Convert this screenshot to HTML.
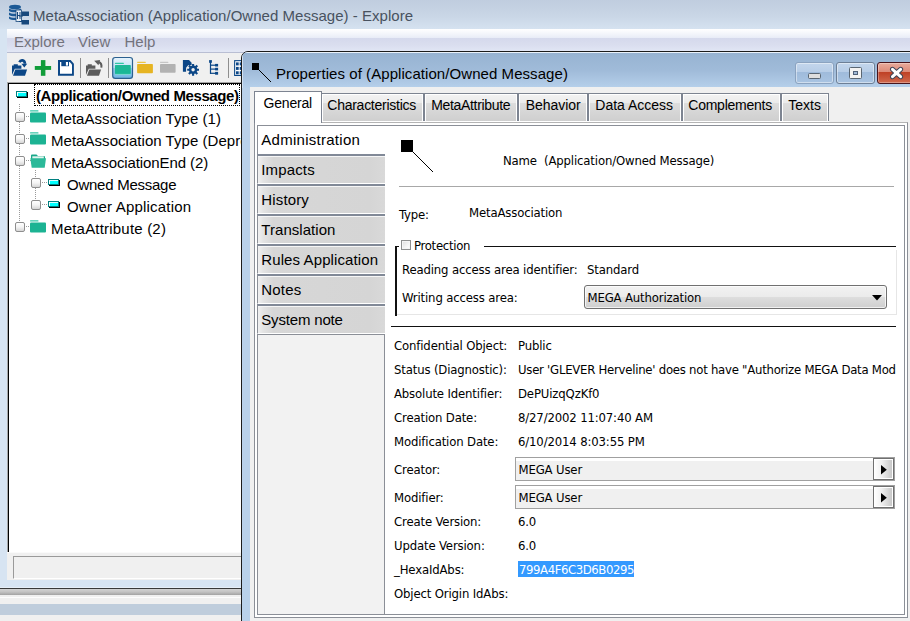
<!DOCTYPE html>
<html><head><meta charset="utf-8"><title>MetaAssociation (Application/Owned Message) - Explore</title>
<style>
*{box-sizing:border-box;margin:0;padding:0}
html,body{width:910px;height:621px;overflow:hidden}
body{position:relative;background:#d7e4f2;font-family:"Liberation Sans",sans-serif;color:#000}
.abs{position:absolute}
.ui{font-family:"Liberation Sans",sans-serif;font-size:15px;white-space:nowrap}
.th{font-family:"DejaVu Sans Condensed","Liberation Sans",sans-serif;font-size:13px;white-space:nowrap;letter-spacing:-0.15px}
#mtitle{left:0;top:0;width:910px;height:29px;background:linear-gradient(180deg,#c0cddf 0%,#c9d6e6 55%,#d5e2f0 100%)}
#mtitle .t{left:33px;top:7px;color:#485260;letter-spacing:.03px}
#menubar{left:7px;top:29px;width:903px;height:24px;border-bottom:1px solid #b9bed3;background:linear-gradient(180deg,#ffffff 0%,#f4f6fb 20%,#e8ecf7 39%,#d5d9ec 40%,#dadeef 70%,#e2e7f5 100%)}
#menubar span{position:absolute;top:4px;color:#73737c}
#toolbar{left:7px;top:53px;width:240px;height:30px;background:#f0f0f0}
#tree{left:7px;top:82px;width:240px;height:470px;background:#fff;border-left:2px solid #000;border-top:2px solid #000}
#status{left:7px;top:552px;width:240px;height:28px;background:#f0f0f0;border-top:1px solid #fafafa}
#status .in{left:6px;top:3px;width:240px;height:23px;border-left:1px solid #9a9a9a;border-top:1px solid #9a9a9a;border-bottom:1px solid #fff}
#b1{left:0;top:580px;width:242px;height:8px;background:#d7e4f2;border-bottom:1px solid #e6eef7}
#b2{left:0;top:588px;width:242px;height:1px;background:#383838}
#b3{left:0;top:589px;width:242px;height:6px;background:linear-gradient(180deg,#d2d2d2 0%,#c2c2c2 50%,#a2a2a2 100%)}
#b4{left:0;top:595px;width:242px;height:9px;background:linear-gradient(180deg,#f0f0f0 0,#f0f0f0 2px,#fdfdfd 2px,#fdfdfd 3px,#f0f0f0 3px)}
#b5{left:0;top:604px;width:242px;height:11px;background:#bfcddc}
#b6{left:0;top:615px;width:242px;height:6px;background:#f0f0f0}
.row{position:absolute;height:22px;line-height:22px}
.exp{width:10px;height:10px;border:1px solid #8e8e8e;border-radius:2px;background:linear-gradient(180deg,#fff 0%,#f4f4f4 50%,#d6d6d6 100%)}
.vdot{width:1px;background:repeating-linear-gradient(180deg,#9a9a9a 0,#9a9a9a 1px,transparent 1px,transparent 2px)}
.hdot{height:1px;background:repeating-linear-gradient(90deg,#9a9a9a 0,#9a9a9a 1px,transparent 1px,transparent 2px)}
.focus{border:1px dotted #000}
.cbtn{border:1px solid #6d7f96;border-radius:3px;background:linear-gradient(180deg,#c3d6ec 0%,#b7cde7 44%,#9fbbdb 47%,#a9c4e2 100%);box-shadow:inset 0 0 0 1px rgba(255,255,255,.45)}
.cbtn.close{border-color:#47141c;background:linear-gradient(180deg,#e8ab9c 0%,#dc8a78 44%,#bf4126 47%,#d0694e 100%);box-shadow:inset 0 0 0 1px rgba(255,255,255,.3)}
.tab{border:1px solid #7d8491;border-bottom:none;background:linear-gradient(180deg,#f3f3f3 0%,#ebebeb 33%,#dddddd 34%,#cfcfcf 100%);box-shadow:inset 1px 1px 0 #fff,inset -1px 0 0 #fff,0 1px 0 #fff;font-family:"Liberation Sans",sans-serif;font-size:14px;line-height:22px;white-space:nowrap}
.tab.sel{background:#fff;line-height:22px;height:33px;box-shadow:none}
.stab{border-top:2px solid #818997;border-left:1px solid #8b8f97;border-bottom:1px solid #fff;background:linear-gradient(90deg,#f0f0f0 0%,#e4e4e4 4%,#d7d7d7 12%,#d5d5d5 88%,#d9d9d9 100%);line-height:27px;box-shadow:inset 0 1px 0 #f6f6f6}
.stab span{position:absolute;left:3.300px;top:0}
.stab.sel{background:#fff;box-shadow:none;border-top:1px solid #8b8f97;border-bottom:none}
.chk{width:10px;height:10px;border:1px solid #8e8f8f;background:linear-gradient(135deg,#dcdcdc 0%,#f4f4f4 60%,#fff 100%);box-shadow:inset 0 0 0 1px #f4f4f4}
.combo{border:1px solid #707070;border-radius:3px;background:linear-gradient(180deg,#f2f2f2 0%,#ebebeb 48%,#dddddd 52%,#cfcfcf 100%);box-shadow:inset 0 0 0 1px rgba(255,255,255,.7)}
.fld{border:1px solid #a0a0a0;background:linear-gradient(180deg,#fff 0,#fff 3px,#f0f0f0 3px,#f0f0f0 100%)}
.fbtn{right:0;top:0;width:21px;height:22px;border:1px solid #707070;background:linear-gradient(90deg,#fff 0%,#f0f0f0 40%,#c4c4c4 100%);box-shadow:inset 0 0 0 1px #fff}
#dlg{left:241px;top:51px;width:700px;height:600px;border:1px solid #1c1c1c;border-radius:7px 0 0 0;background:#b9d1ea;overflow:hidden}
#dtitle{left:0;top:0;width:700px;height:36px;background:linear-gradient(180deg,#97b3d2 0%,#a0bbd9 50%,#b6d0eb 100%);border-top:1px solid #e9f1fa;border-left:1px solid #d2e1f2}
#dclient{left:8px;top:35px;width:700px;height:600px;background:#f0f0f0}
</style></head><body>
<div id="mtitle" class="abs"><svg class="abs" style="left:7px;top:3px" width="24" height="24" viewBox="7 3 24 24"><g fill="#1d5a96"><ellipse cx="15" cy="7" rx="6" ry="2.300"/><path d="M9 8.500c1.500 1.800 10.500 1.800 12 0v2.500c-1.500 1.800-10.500 1.800-12 0z"/><path d="M9 12.500c1.500 1.800 10.500 1.800 12 0v2.500c-1.500 1.800-10.500 1.800-12 0z"/><path d="M9 16.500c1.500 1.800 10.500 1.800 12 0v2c-1.500 2-10.500 2-12 0z"/></g><rect x="16" y="10" width="5.500" height="11.500" fill="#e6eef6" stroke="#17487c" stroke-width=".8"/><path d="M17.500 12v7M20 12v7M17.500 15.500h2.500" stroke="#17487c" stroke-width="1"/><rect x="21.500" y="11.500" width="7.500" height="4.500" fill="#17487c"/><rect x="21.500" y="20" width="7.500" height="4.500" fill="#17487c"/><path d="M19 16h4M19 21.500h3" stroke="#17487c" stroke-width="1.200"/></svg><span class="abs ui t">MetaAssociation (Application/Owned Message) - Explore</span></div>
<div id="menubar" class="abs ui"><span style="left:7px">Explore</span><span style="left:71px">View</span><span style="left:117.500px">Help</span></div>
<div id="toolbar" class="abs"><svg class="abs" style="left:0;top:-1px" width="240" height="31" viewBox="7 52 240 31">
 <g fill="#0c4787">
  <path d="M12 65.400h1.700v-1.200h4.100v1.200h3.600v3.400h-6.600l-2.800 6.200z"/>
  <path d="M15.300 69.400h11.800l-2.100 6.300h-12z"/>
  <path d="M19.500 62.200c1-2.600 5.200-2.800 5.400 1.600" fill="none" stroke="#0c4787" stroke-width="2.700"/>
  <path d="M21.400 63.700h5.800l-2.900 3.700z"/>
 </g>
 <rect x="40.900" y="60.100" width="4.500" height="15.700" fill="#119c39"/>
 <rect x="34.800" y="66" width="16.300" height="3.900" fill="#119c39"/>
 <path d="M58 60.100h12.600l3.300 3.700v12h-15.900z" fill="#0c4787"/>
 <path d="M60 62h9.700l2.300 2.600v9.200h-12z" fill="#fff"/>
 <rect x="61.300" y="60.100" width="7.700" height="6.100" fill="#0c4787"/>
 <rect x="65.900" y="62" width="2.100" height="3.600" fill="#fff"/>
 <rect x="80" y="58" width="1" height="20" fill="#8e8e8e"/>
 <g fill="#5c5c5c">
  <path d="M86 65.400h1.700v-1.200h4.100v1.200h3.600v3.400h-6.600l-2.800 6.200z"/>
  <path d="M89.300 69.400h11.800l-2.100 6.300h-12z"/>
  <path d="M101.300 67.600c.6-2.700-.4-4.700-2.600-5.600" fill="none" stroke="#5c5c5c" stroke-width="2"/>
  <path d="M94.200 60.800l5.900-.8-1.700 5.200z"/>
 </g>
 <rect x="108" y="58" width="1" height="20" fill="#8e8e8e"/>
 <defs><linearGradient id="pb" x1="0" y1="0" x2="0" y2="1"><stop offset="0" stop-color="#e6f3fc"/><stop offset=".5" stop-color="#c3e2f7"/><stop offset=".52" stop-color="#9acdee"/><stop offset="1" stop-color="#6fb5e3"/></linearGradient></defs>
 <rect x="112.700" y="57.500" width="19.800" height="20.800" rx="2.600" fill="url(#pb)" stroke="#2b608f" stroke-width="1.200"/>
 <rect x="114.900" y="62.800" width="9" height="1.200" rx=".4" fill="#2cc7a5"/>
 <rect x="114.900" y="65" width="15.900" height="9" rx=".8" fill="#1ab896"/>
 <rect x="115.500" y="73.900" width="14.700" height=".8" fill="#7adfc8"/>
 <rect x="137.100" y="61.700" width="8.700" height="1.200" rx=".4" fill="#efc542"/>
 <rect x="137.100" y="63.900" width="15.800" height="9.400" rx=".8" fill="#e6b422"/>
 <rect x="160" y="61.800" width="8.400" height="1.100" rx=".4" fill="#c6c6c6"/>
 <rect x="160" y="63.900" width="15.600" height="8.900" rx=".8" fill="#b2b2b2"/>
 <g fill="#0c4787">
  <path d="M182.900 60.100h6.100l2.600 2.600v2.200h-3.200l-2.300 2.800v4.100h-3.200z"/>
  <circle cx="193.100" cy="69.800" r="4.200"/>
  <path d="M193.100 63.900v11.800M187.200 69.800h11.800M188.900 65.600l8.400 8.400M197.300 65.600l-8.400 8.400" stroke="#0c4787" stroke-width="2.100" fill="none"/>
 </g>
 <circle cx="193.100" cy="69.800" r="1.700" fill="#f0f0f0"/>
 <g fill="#0c4787">
  <rect x="209.100" y="60.100" width="2.800" height="2.700"/>
  <rect x="209.900" y="62" width="1.200" height="11.900"/>
  <rect x="210" y="64.600" width="6" height="1.200"/><rect x="215.100" y="63.900" width="3" height="2.600"/>
  <rect x="210" y="68.500" width="6" height="1.200"/><rect x="215.100" y="67.800" width="3" height="2.600"/>
  <rect x="210" y="72.700" width="6" height="1.200"/><rect x="215.100" y="71.900" width="3" height="2.800"/>
 </g>
 <rect x="228" y="58" width="1" height="20" fill="#8e8e8e"/>
 <rect x="234.100" y="60.100" width="16" height="15.900" fill="#0c4787"/>
 <rect x="235.200" y="61.200" width="14" height="13.700" fill="#fff"/>
 <g fill="#0c4787">
  <rect x="236" y="62.400" width="2.700" height="3"/><rect x="239.700" y="62.400" width="2.700" height="3"/>
  <rect x="236" y="66.900" width="2.700" height="3"/><rect x="239.700" y="66.900" width="2.700" height="3"/>
  <rect x="236" y="71.300" width="2.700" height="3"/><rect x="239.700" y="71.300" width="2.700" height="3"/>
 </g>
</svg>
</div>
<div id="tree" class="abs ui"><div class="abs vdot" style="left:10px;top:20px;height:125px"></div><div class="abs vdot" style="left:26px;top:86px;height:37px"></div><svg class="abs" style="left:7px;top:7px" width="14" height="9" viewBox="0 0 14 9"><rect x="1" y="1" width="11" height="6" fill="#000"/><rect x="0" y="0" width="11" height="6" fill="#008080"/><rect x="1" y="1" width="9" height="4" fill="#00ffff"/><rect x="1" y="1" width="9" height="1" fill="#d8ffff"/><rect x="1" y="1" width="1" height="4" fill="#f4ffff"/></svg><div class="abs focus" style="left:25px;top:0px;width:206px;height:22px"></div><span class="row" style="left:27px;top:1px;font-weight:bold;letter-spacing:-0.4px">(Application/Owned Message)</span><div class="abs hdot" style="left:17px;top:32px;width:5px"></div><div class="abs exp" style="left:6px;top:28px"></div><svg class="abs" style="left:21px;top:26px" width="17" height="13" viewBox="0 0 17 13"><rect x="0" y="0.300" width="8.500" height="1.300" rx=".5" fill="#35c5a6"/><rect x="0" y="2.400" width="16" height="10" rx="1" fill="#1cb393"/></svg><span class="row" style="left:42px;top:24px;letter-spacing:0.04px">MetaAssociation Type (1)</span><div class="abs hdot" style="left:17px;top:54px;width:5px"></div><div class="abs exp" style="left:6px;top:50px"></div><svg class="abs" style="left:21px;top:48px" width="17" height="13" viewBox="0 0 17 13"><rect x="0" y="0.300" width="8.500" height="1.300" rx=".5" fill="#35c5a6"/><rect x="0" y="2.400" width="16" height="10" rx="1" fill="#1cb393"/></svg><span class="row" style="left:42px;top:46px;letter-spacing:0.04px">MetaAssociation Type (Deprecated)</span><div class="abs hdot" style="left:17px;top:76px;width:5px"></div><div class="abs exp" style="left:6px;top:72px"></div><svg class="abs" style="left:21px;top:70px" width="17" height="15" viewBox="0 0 17 15"><path d="M1 1.500q0-1 1-1h4.500l1.500 1.500h6q1 0 1 1v3h-14z" fill="#1aa88a"/><rect x="2.300" y="2.300" width="11.500" height="3" fill="#e4f5f0"/><path d="M0.300 4.300h15.700l-1.300 9.500h-13z" fill="#2bb999"/></svg><span class="row" style="left:42px;top:68px;letter-spacing:-0.1px">MetaAssociationEnd (2)</span><div class="abs hdot" style="left:33px;top:98px;width:5px"></div><div class="abs exp" style="left:22px;top:94px"></div><svg class="abs" style="left:39px;top:95px" width="14" height="9" viewBox="0 0 14 9"><rect x="1" y="1" width="11" height="6" fill="#000"/><rect x="0" y="0" width="11" height="6" fill="#008080"/><rect x="1" y="1" width="9" height="4" fill="#00ffff"/><rect x="1" y="1" width="9" height="1" fill="#d8ffff"/><rect x="1" y="1" width="1" height="4" fill="#f4ffff"/></svg><span class="row" style="left:58px;top:90px;letter-spacing:-0.25px">Owned Message</span><div class="abs hdot" style="left:33px;top:120px;width:5px"></div><div class="abs exp" style="left:22px;top:116px"></div><svg class="abs" style="left:39px;top:117px" width="14" height="9" viewBox="0 0 14 9"><rect x="1" y="1" width="11" height="6" fill="#000"/><rect x="0" y="0" width="11" height="6" fill="#008080"/><rect x="1" y="1" width="9" height="4" fill="#00ffff"/><rect x="1" y="1" width="9" height="1" fill="#d8ffff"/><rect x="1" y="1" width="1" height="4" fill="#f4ffff"/></svg><span class="row" style="left:58px;top:112px;letter-spacing:0.2px">Owner Application</span><div class="abs hdot" style="left:17px;top:142px;width:5px"></div><div class="abs exp" style="left:6px;top:138px"></div><svg class="abs" style="left:21px;top:136px" width="17" height="13" viewBox="0 0 17 13"><rect x="0" y="0.300" width="8.500" height="1.300" rx=".5" fill="#35c5a6"/><rect x="0" y="2.400" width="16" height="10" rx="1" fill="#1cb393"/></svg><span class="row" style="left:42px;top:134px;letter-spacing:0.2px">MetaAttribute (2)</span></div>
<div class="abs" style="left:7px;top:82px;width:240px;height:1px;background:#a6a6a6"></div><div class="abs" style="left:7px;top:82px;width:1px;height:470px;background:#a6a6a6"></div>
<div id="status" class="abs"><div class="abs in"></div></div>
<div id="b1" class="abs"></div><div id="b2" class="abs"></div><div id="b3" class="abs"></div><div id="b4" class="abs"></div><div id="b5" class="abs"></div><div id="b6" class="abs"></div>
<div id="dlg" class="abs">
 <div id="dtitle" class="abs"></div><svg class="abs" style="left:9px;top:10px" width="22" height="22" viewBox="251 62 22 22"><rect x="252" y="63" width="7" height="7" fill="#000"/><path d="M258.500 69.500l12.500 12.500" stroke="#000" stroke-width="1" shape-rendering="crispEdges"/></svg><span class="abs ui" style="left:34px;top:14px;line-height:16px;color:#000;letter-spacing:.065px;">Properties of (Application/Owned Message)</span><div class="abs cbtn" style="left:553px;top:10px;width:39px;height:22px;border-color:#8ba3c0"><div class="abs" style="left:12px;top:10px;width:13px;height:6px;border:1px solid #5a6672;border-radius:1.500px;background:#dedede"></div></div>
<div class="abs cbtn" style="left:594px;top:10px;width:39px;height:22px"><div class="abs" style="left:12px;top:4px;width:13px;height:12px;border:1px solid #5a6672;border-radius:1.500px;background:#f2f2f2"><div class="abs" style="left:3px;top:3px;width:5px;height:4px;border:1px solid #4f6078;background:#9fb8d6"></div></div></div>
<div class="abs cbtn close" style="left:635px;top:10px;width:45px;height:22px"><svg class="abs" style="left:11px;top:3px" width="18" height="15" viewBox="0 0 18 15"><path d="M3.500 3.300l8.100 7.400M11.600 3.300l-8.100 7.400" stroke="#3f4658" stroke-width="5" stroke-linecap="round" fill="none"/><path d="M3.500 3.300l8.100 7.400M11.600 3.300l-8.100 7.400" stroke="#fff" stroke-width="3" stroke-linecap="round" fill="none"/></svg></div>
 <div id="dclient" class="abs"><div class="abs" style="left:4px;top:35px;width:654px;height:496px;border:1px solid #8b8f97;border-top-color:#b4b4b4;background:#fff"></div><div class="abs tab" style="left:71px;top:6px;width:103px;height:28px"><span class="abs" style="left:5.3px;top:0;letter-spacing:-0.26px">Characteristics</span></div><div class="abs tab" style="left:174px;top:6px;width:94px;height:28px"><span class="abs" style="left:6.3px;top:0;letter-spacing:-0.34px">MetaAttribute</span></div><div class="abs tab" style="left:268px;top:6px;width:70px;height:28px"><span class="abs" style="left:6.8px;top:0;letter-spacing:-0.05px">Behavior</span></div><div class="abs tab" style="left:338px;top:6px;width:94px;height:28px"><span class="abs" style="left:6.3px;top:0;letter-spacing:-0.02px">Data Access</span></div><div class="abs tab" style="left:432px;top:6px;width:99px;height:28px"><span class="abs" style="left:5.3px;top:0;letter-spacing:-0.25px">Complements</span></div><div class="abs tab" style="left:531px;top:6px;width:48px;height:28px"><span class="abs" style="left:6.3px;top:0;letter-spacing:0px">Texts</span></div><div class="abs tab sel" style="left:4px;top:4px;width:68px;height:32px"><span class="abs" style="left:8.5px;top:0;letter-spacing:-0.19px">General</span></div><div class="abs" style="left:7px;top:38px;width:648px;height:490px;border:1px solid #8b8f97;background:#fff"></div><div class="abs" style="left:7px;top:247px;width:128px;height:281px;background:#f2f2f2;border:1px solid #8b8f97"></div><div class="abs stab sel ui" style="left:7px;top:38px;width:128px;height:30px"><span style="letter-spacing:0.27px">Administration</span></div><div class="abs stab ui" style="left:7px;top:67px;width:128px;height:30px"><span style="letter-spacing:0.14px">Impacts</span></div><div class="abs stab ui" style="left:7px;top:97px;width:128px;height:30px"><span style="letter-spacing:0.14px">History</span></div><div class="abs stab ui" style="left:7px;top:127px;width:128px;height:30px"><span style="letter-spacing:0.05px">Translation</span></div><div class="abs stab ui" style="left:7px;top:157px;width:128px;height:30px"><span style="letter-spacing:0.1px">Rules Application</span></div><div class="abs stab ui" style="left:7px;top:187px;width:128px;height:30px"><span style="letter-spacing:0.18px">Notes</span></div><div class="abs stab ui" style="left:7px;top:217px;width:128px;height:30px"><span style="letter-spacing:-0.18px">System note</span></div><svg class="abs" style="left:150px;top:52px" width="36" height="36" viewBox="400 139 36 36"><rect x="401" y="140" width="12" height="12" fill="#000"/><path d="M412.500 151.500l20.500 20.500" stroke="#000" stroke-width="1" shape-rendering="crispEdges"/></svg><span class="abs th" style="left:253px;top:66px;line-height:16px;">Name&nbsp;&nbsp;(Application/Owned Message)</span><div class="abs" style="left:149px;top:99px;width:495px;height:1px;background:#a8a8a8;"></div><span class="abs th" style="left:149px;top:120px;line-height:16px;">Type:</span><span class="abs th" style="left:219px;top:118px;line-height:16px;">MetaAssociation</span><div class="abs" style="left:146px;top:163px;width:501px;height:65px;background:#fff;border-right:1px solid #e6e6e6;border-bottom:1px solid #e6e6e6"></div><div class="abs" style="left:145px;top:159px;width:1.5px;height:70px;background:#111;"></div><div class="abs" style="left:145px;top:159px;width:4px;height:1px;background:#111;"></div><div class="abs" style="left:234px;top:159px;width:412px;height:1px;background:#111;"></div><div class="abs chk" style="left:151px;top:153px"></div><span class="abs th" style="left:164px;top:151px;line-height:16px;letter-spacing:-0.3px">Protection</span><span class="abs th" style="left:152px;top:175px;line-height:16px;">Reading access area identifier:</span><span class="abs th" style="left:337px;top:175px;line-height:16px;">Standard</span><span class="abs th" style="left:152px;top:203px;line-height:16px;">Writing access area:</span><div class="abs combo" style="left:334px;top:198px;width:303px;height:24px"><span class="abs th" style="left:2.500px;top:4px;line-height:16px">MEGA Authorization</span><svg class="abs" style="left:287px;top:9px" width="10" height="6" viewBox="0 0 10 6"><path d="M0 0h10l-5 5.500z" fill="#000"/></svg></div><div class="abs" style="left:141px;top:239px;width:505px;height:1.3px;background:#111;"></div><span class="abs th" style="left:144px;top:251px;line-height:16px;">Confidential Object:</span><span class="abs th" style="left:268px;top:251px;line-height:16px;">Public</span><span class="abs th" style="left:144px;top:275px;line-height:16px;">Status (Diagnostic):</span><span class="abs th" style="left:268px;top:275px;line-height:16px;max-width:378px;overflow:hidden;letter-spacing:-0.25px;">User 'GLEVER Herveline' does not have "Authorize MEGA Data Modification"</span><span class="abs th" style="left:144px;top:299px;line-height:16px;">Absolute Identifier:</span><span class="abs th" style="left:268px;top:299px;line-height:16px;">DePUizqQzKf0</span><span class="abs th" style="left:144px;top:323px;line-height:16px;">Creation Date:</span><span class="abs th" style="left:268px;top:323px;line-height:16px;">8/27/2002 11:07:40 AM</span><span class="abs th" style="left:144px;top:347px;line-height:16px;">Modification Date:</span><span class="abs th" style="left:268px;top:347px;line-height:16px;">6/10/2014 8:03:55 PM</span><span class="abs th" style="left:144px;top:375px;line-height:16px;">Creator:</span><span class="abs th" style="left:144px;top:403px;line-height:16px;">Modifier:</span><span class="abs th" style="left:144px;top:427px;line-height:16px;">Create Version:</span><span class="abs th" style="left:268px;top:427px;line-height:16px;">6.0</span><span class="abs th" style="left:144px;top:451px;line-height:16px;">Update Version:</span><span class="abs th" style="left:268px;top:451px;line-height:16px;">6.0</span><span class="abs th" style="left:144px;top:475px;line-height:16px;">_HexaIdAbs:</span><span class="abs th" style="left:144px;top:499px;line-height:16px;">Object Origin IdAbs:</span><div class="abs fld" style="left:265px;top:370px;width:380px;height:24px"><span class="abs th" style="left:2.500px;top:4px;line-height:16px">MEGA User</span><div class="abs fbtn"><svg class="abs" style="left:7px;top:6px" width="7" height="10" viewBox="0 0 7 10"><path d="M0 0l5.800 4.700-5.800 4.700z" fill="#000"/></svg></div></div><div class="abs fld" style="left:265px;top:398px;width:380px;height:24px"><span class="abs th" style="left:2.500px;top:4px;line-height:16px">MEGA User</span><div class="abs fbtn"><svg class="abs" style="left:7px;top:6px" width="7" height="10" viewBox="0 0 7 10"><path d="M0 0l5.800 4.700-5.800 4.700z" fill="#000"/></svg></div></div><div class="abs" style="left:268px;top:474px;width:116px;height:16px;background:#3399ff;"></div><span class="abs th" style="left:269px;top:475px;line-height:16px;color:#fff;letter-spacing:-0.42px">799A4F6C3D6B0295</span></div>
</div>
</body></html>
